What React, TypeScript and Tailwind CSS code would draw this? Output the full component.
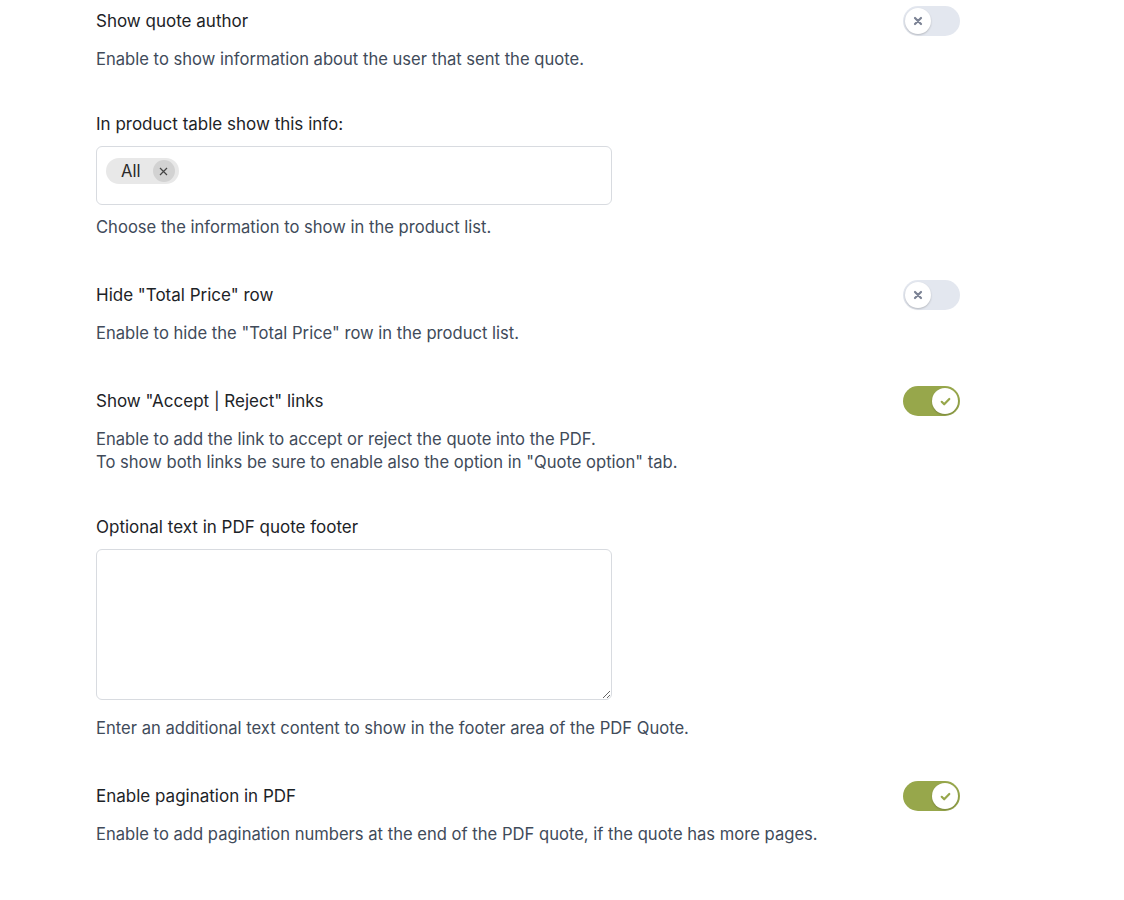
import React from "react";

const font = { fontFamily: "Inter, 'Noto Sans', sans-serif" };

const Toggle: React.FC<{ on: boolean }> = ({ on }) => (
  <div
    className={`w-[57px] h-[30px] rounded-full flex items-center px-[2px] ${
      on ? "bg-[#97a74b] justify-end" : "bg-[#e3e7ef] justify-start"
    }`}
  >
    <div className="w-[26px] h-[26px] rounded-full bg-white shadow-[0_1px_2px_rgba(0,0,0,0.2)] flex items-center justify-center">
      {on ? (
        <svg width="13" height="13" viewBox="0 0 12 12">
          <path d="M2.5 6.3l2.3 2.3 4.7-4.9" stroke="#97a74b" strokeWidth="2" fill="none" strokeLinecap="round" strokeLinejoin="round" />
        </svg>
      ) : (
        <svg width="10" height="10" viewBox="0 0 10 10">
          <path d="M2 2l6 6M8 2l-6 6" stroke="#7b8294" strokeWidth="2.2" strokeLinecap="round" />
        </svg>
      )}
    </div>
  </div>
);

const Label: React.FC<{ children: React.ReactNode }> = ({ children }) => (
  <div className="text-[17px] leading-[24px] text-[#1d2327]">{children}</div>
);

const Desc: React.FC<{ children: React.ReactNode }> = ({ children }) => (
  <div className="text-[16.6px] leading-[23px] text-[#414b5a]">{children}</div>
);

const ToggleRow: React.FC<{ label: string; desc: React.ReactNode; on: boolean }> = ({ label, desc, on }) => (
  <div>
    <div className="flex items-center justify-between w-[864px] h-[30px]">
      <Label>{label}</Label>
      <Toggle on={on} />
    </div>
    <div className="mt-[12px]">
      <Desc>{desc}</Desc>
    </div>
  </div>
);

export default function App() {
  return (
    <div className="min-h-[900px] bg-white pl-[96px] pt-[6px]" style={font}>
      <ToggleRow label="Show quote author" desc="Enable to show information about the user that sent the quote." on={false} />

      <div className="mt-[41px]">
        <Label>In product table show this info:</Label>
        <div className="mt-[10px] w-[516px] h-[59px] border border-[#d8dbe0] rounded-[6px] px-[9px] pt-[11px] flex items-start">
          <div className="flex items-center h-[26px] rounded-full bg-[#e8e8e8] pl-[15px] pr-[4px] gap-[12px]">
            <span className="text-[16.6px] text-[#2b2b2b]">All</span>
            <span className="w-[22px] h-[22px] rounded-full bg-[#d2d2d2] flex items-center justify-center">
              <svg width="9" height="9" viewBox="0 0 9 9">
                <path d="M1 1l7 7M8 1l-7 7" stroke="#444" strokeWidth="1.2" />
              </svg>
            </span>
          </div>
        </div>
        <div className="mt-[11px]">
          <Desc>Choose the information to show in the product list.</Desc>
        </div>
      </div>

      <div className="mt-[41px]">
        <ToggleRow label={'Hide "Total Price" row'} desc={'Enable to hide the "Total Price" row in the product list.'} on={false} />
      </div>

      <div className="mt-[41px]">
        <ToggleRow
          label={'Show "Accept | Reject" links'}
          desc={
            <>
              Enable to add the link to accept or reject the quote into the PDF.
              <br />
              To show both links be sure to enable also the option in "Quote option" tab.
            </>
          }
          on={true}
        />
      </div>

      <div className="mt-[41px]">
        <Label>Optional text in PDF quote footer</Label>
        <textarea className="block mt-[10px] w-[516px] h-[151px] border border-[#d8dbe0] rounded-[6px] outline-none resize" />
        <div className="mt-[17px]">
          <Desc>Enter an additional text content to show in the footer area of the PDF Quote.</Desc>
        </div>
      </div>

      <div className="mt-[41px]">
        <ToggleRow
          label="Enable pagination in PDF"
          desc="Enable to add pagination numbers at the end of the PDF quote, if the quote has more pages."
          on={true}
        />
      </div>
    </div>
  );
}
